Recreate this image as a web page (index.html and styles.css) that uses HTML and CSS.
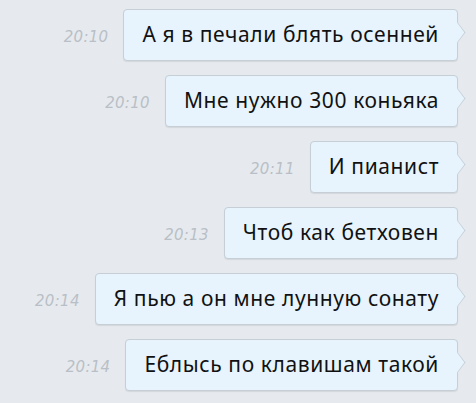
FILE: index.html
```html
<!DOCTYPE html>
<html>
<head>
<meta charset="utf-8">
<link rel="stylesheet" href="styles.css">
</head>
<body>
<div class="chat">
  <div class="row"><span class="time">20:10</span><div class="bubble">А я в печали блять осенней</div></div>
  <div class="row"><span class="time">20:10</span><div class="bubble">Мне нужно 300 коньяка</div></div>
  <div class="row"><span class="time">20:11</span><div class="bubble">И пианист</div></div>
  <div class="row"><span class="time">20:13</span><div class="bubble">Чтоб как бетховен</div></div>
  <div class="row"><span class="time">20:14</span><div class="bubble">Я пью а он мне лунную сонату</div></div>
  <div class="row"><span class="time">20:14</span><div class="bubble">Еблысь по клавишам такой</div></div>
</div>
</body>
</html>
```
FILE: styles.css
```css
html, body {
  margin: 0;
  padding: 0;
  background: #e6eaee;
}
.chat {
  width: 476px;
  height: 403px;
  box-sizing: border-box;
  padding: 9px 18px 0 0;
  display: flex;
  flex-direction: column;
  gap: 14px;
}
.row {
  display: flex;
  justify-content: flex-end;
  align-items: center;
  gap: 15px;
}
.time {
  font-family: "DejaVu Sans", sans-serif;
  font-style: italic;
  font-size: 15px;
  color: #b9bfc7;
  letter-spacing: 0.3px;
  padding-top: 3px;
}
.bubble {
  position: relative;
  height: 52px;
  box-sizing: border-box;
  padding: 0 18px 2px;
  display: flex;
  align-items: center;
  background: #e7f4fd;
  border: 1px solid #c6ced6;
  border-radius: 4px;
  box-shadow: 0 1px 1px rgba(0,0,0,0.08);
  font-family: "Noto Sans", sans-serif;
  font-size: 21px;
  letter-spacing: 0.6px;
  color: #111;
}
.bubble::after {
  content: "";
  position: absolute;
  right: -8px;
  top: 15px;
  width: 14px;
  height: 14px;
  background: #e7f4fd;
  border-right: 1px solid #c6ced6;
  border-top: 1px solid #c6ced6;
  transform: scaleX(0.75) rotate(45deg);
}
```
